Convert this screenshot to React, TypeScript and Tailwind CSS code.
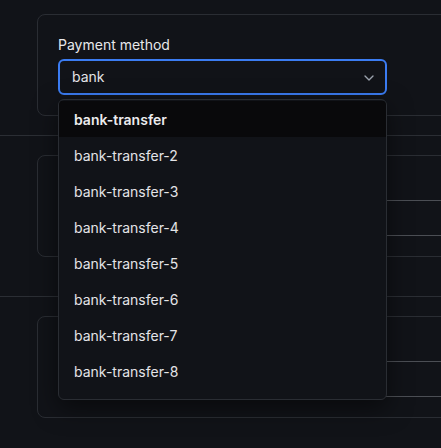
import React from "react";
import { ChevronDown } from "lucide-react";

const items = [
  "bank-transfer",
  "bank-transfer-2",
  "bank-transfer-3",
  "bank-transfer-4",
  "bank-transfer-5",
  "bank-transfer-6",
  "bank-transfer-7",
  "bank-transfer-8",
];

function Card({ children }: { children: React.ReactNode }) {
  return (
    <div className="ml-[37px] w-[620px] rounded-lg border border-[#2a2d33] p-5 flex flex-col gap-1">
      {children}
    </div>
  );
}

export default function App() {
  return (
    <div
      className="relative h-[448px] w-[441px] overflow-hidden bg-[#111318] text-[#e4e4e7] text-sm"
      style={{ fontFamily: "Inter, 'Noto Sans', sans-serif" }}
    >
      <div className="pt-[14px] flex flex-col">
        <Card>
          <label className="leading-5 h-5 text-[#e8e8ea]">Payment method</label>
          <div className="relative w-[329px]">
            <div className="flex h-9 items-center justify-between rounded-md border-2 border-[#3b7cf2] bg-[#111318] pl-[12px] pr-2">
              <span>bank</span>
              <ChevronDown size={16} className="mt-[2px] text-[#9ca3af]" strokeWidth={2} />
            </div>
          </div>
        </Card>
        <div className="mt-[19px] h-px w-full bg-[#2b2e34]" />
        <div className="mt-[19px]">
          <Card>
            <div className="h-5" />
            <div className="h-9 w-full rounded-md border border-[#4b4e54]" />
          </Card>
        </div>
        <div className="mt-[39px] h-px w-full bg-[#2b2e34]" />
        <div className="mt-[19px]">
          <Card>
            <div className="h-5" />
            <div className="h-9 w-full rounded-md border border-[#4b4e54]" />
          </Card>
        </div>
      </div>

      <div className="absolute left-[58px] top-[99px] w-[329px] rounded-md border border-[#2a2d33] bg-[#111318] pt-px pb-[10px] shadow-[0_8px_24px_rgba(0,0,0,0.5)] overflow-hidden">
        {items.map((it, i) => (
          <div
            key={it}
            className={
              i === 0
                ? "flex h-9 items-center bg-[#09090b] pl-[15px] pt-[2px] font-semibold text-[#ececee]"
                : "flex h-9 items-center pl-[15px] pt-[2px] text-[#e4e4e7]"
            }
          >
            {it}
          </div>
        ))}
      </div>
    </div>
  );
}
